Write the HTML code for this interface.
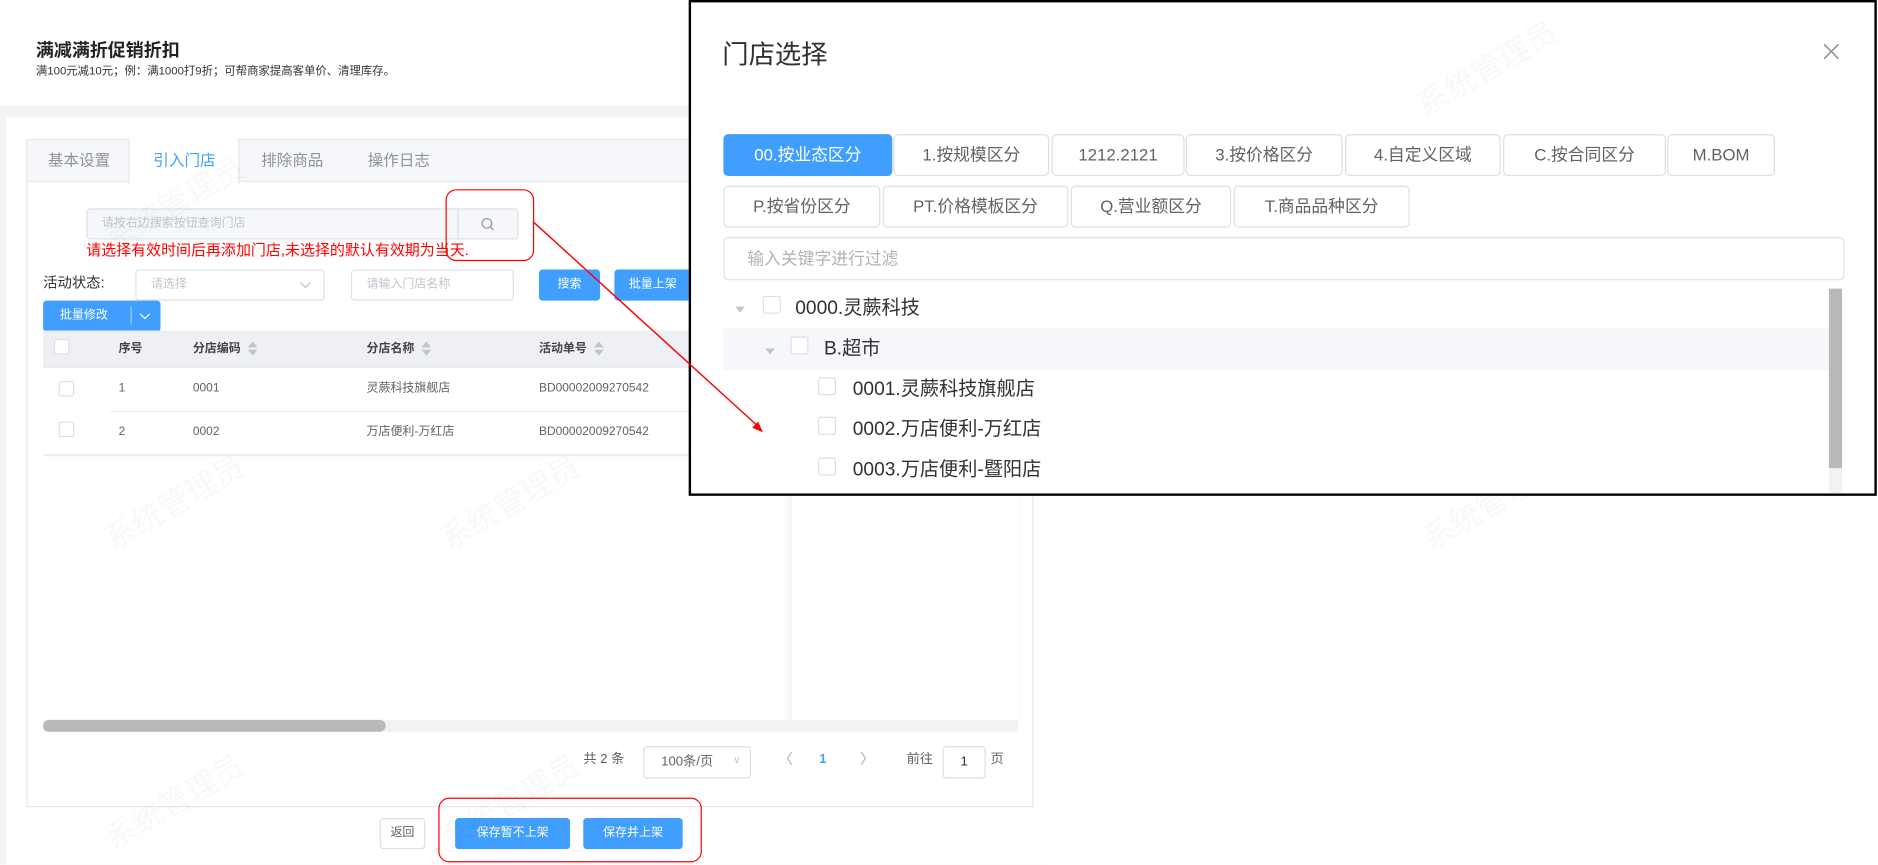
<!DOCTYPE html>
<html><head><meta charset="utf-8">
<style>
*{box-sizing:border-box;margin:0;padding:0}
html,body{width:1878px;height:864px;overflow:hidden;background:#fff}
body{font-family:"Liberation Sans","Noto Sans CJK SC",sans-serif;color:#606266}
#s{position:absolute;left:0;top:0;width:1568px;height:722px;transform:scale(1.1977);transform-origin:0 0;background:#fff;overflow:hidden}
.a{position:absolute;white-space:nowrap;line-height:1.2}
.btn{position:absolute;background:#409eff;color:#fff;font-size:10px;border-radius:3px;text-align:center}
.inp{position:absolute;border:1px solid #dcdfe6;border-radius:3px;background:#fff;font-size:10px;color:#c0c4cc;padding-left:12px}
.cb{position:absolute;width:13px;height:13px;border:1px solid #dcdfe6;border-radius:2px;background:#fff}
.tag{position:absolute;height:35px;border:1px solid #dcdfe6;border-radius:4px;font-size:14px;color:#606266;text-align:center;line-height:33px;background:#fff}
.wm{position:absolute;color:rgba(0,0,0,0.028);font-size:26px;transform:rotate(-30deg);white-space:nowrap}
.tr{position:absolute;font-size:16px;color:#303133;line-height:20px;white-space:nowrap}
.td{position:absolute;font-size:10px;line-height:14px;white-space:nowrap;color:#606266}
.sort{display:inline-block;vertical-align:middle;margin-left:6px;width:0;height:0;border-left:4px solid transparent;border-right:4px solid transparent;border-bottom:5px solid #c0c4cc;position:relative;top:-4px}
.sort:after{content:"";position:absolute;left:-4px;top:7px;border-left:4px solid transparent;border-right:4px solid transparent;border-top:5px solid #c0c4cc}
</style></head><body>
<div id="s">
<div class="a" style="left:30px;top:34px;font-size:15px;font-weight:bold;color:#222">满减满折促销折扣</div>
<div class="a" style="left:30px;top:54px;font-size:9.5px;color:#333">满100元减10元；例：满1000打9折；可帮商家提高客单价、清理库存。</div>
<div class="a" style="left:0;top:88px;width:875px;height:634px;background:#f2f3f5"></div>
<div class="a" style="left:5px;top:98px;width:870px;height:624px;background:#fff"></div>
<div class="a" style="left:22px;top:116px;width:841px;height:558px;border:1px solid #e4e7ed;background:#fff"></div>
<div class="a" style="left:22px;top:116px;width:841px;height:36px;background:#f5f7fa;border:1px solid #e4e7ed"></div>
<div class="a" style="left:107px;top:116px;width:93px;height:37px;background:#fff;border-left:1px solid #e4e7ed;border-right:1px solid #e4e7ed"></div>
<div class="a" style="left:40px;top:126px;font-size:13px;color:#909399">基本设置</div>
<div class="a" style="left:128px;top:126px;font-size:13px;color:#409eff">引入门店</div>
<div class="a" style="left:218px;top:126px;font-size:13px;color:#909399">排除商品</div>
<div class="a" style="left:307px;top:126px;font-size:13px;color:#909399">操作日志</div>
<div class="inp" style="left:72px;top:174px;width:311px;height:26px;line-height:24px;background:#f5f7fa;border-radius:3px 0 0 3px">请按右边搜索按钮查询门店</div>
<div class="a" style="left:382px;top:174px;width:51px;height:26px;border:1px solid #dcdfe6;background:#f5f7fa;border-radius:0 3px 3px 0"></div>
<svg class="a" style="left:401px;top:181px" width="12" height="12" viewBox="0 0 12 12"><circle cx="5.5" cy="5.5" r="4" fill="none" stroke="#909399" stroke-width="1"/><path d="M8.5 8.5L11 11" stroke="#909399"/></svg>
<div class="a" style="left:372px;top:158px;width:74px;height:60px;border:1.5px solid #f00;border-radius:9px"></div>
<div class="a" style="left:72px;top:202px;font-size:12.5px;color:#f00">请选择有效时间后再添加门店,未选择的默认有效期为当天.</div>
<div class="a" style="left:36px;top:229px;font-size:12px;color:#333">活动状态:</div>
<div class="inp" style="left:113px;top:225px;width:158px;height:26px;line-height:24px">请选择</div>
<svg class="a" style="left:250px;top:234px" width="10" height="8"><path d="M1 2l4 4 4-4" fill="none" stroke="#c0c4cc"/></svg>
<div class="inp" style="left:293px;top:225px;width:136px;height:26px;line-height:24px">请输入门店名称</div>
<div class="btn" style="left:450px;top:225px;width:51px;height:26px;line-height:26px">搜索</div>
<div class="btn" style="left:513px;top:225px;width:64px;height:26px;line-height:26px">批量上架</div>
<div class="btn" style="left:36px;top:251px;width:98px;height:26px;line-height:26px;text-align:left;padding-left:14px">批量修改</div>
<div class="a" style="left:109px;top:256px;width:1px;height:15px;background:rgba(255,255,255,.5)"></div>
<svg class="a" style="left:116px;top:260px" width="10" height="8"><path d="M1 2l4 4 4-4" fill="none" stroke="#fff"/></svg>
<div class="a" style="left:36px;top:276px;width:540px;height:31px;background:#eef0f5;border-bottom:1px solid #e4e7ed"></div>
<div class="cb" style="left:45px;top:283px"></div>
<div class="td" style="left:99px;top:285px;color:#444;font-weight:bold">序号</div>
<div class="td" style="left:161px;top:285px;color:#444;font-weight:bold">分店编码<span class="sort"></span></div>
<div class="td" style="left:306px;top:285px;color:#444;font-weight:bold">分店名称<span class="sort"></span></div>
<div class="td" style="left:450px;top:285px;color:#444;font-weight:bold">活动单号<span class="sort"></span></div>
<div class="cb" style="left:49px;top:318px"></div>
<div class="td" style="left:99px;top:318px">1</div>
<div class="td" style="left:161px;top:318px">0001</div>
<div class="td" style="left:306px;top:318px">灵蕨科技旗舰店</div>
<div class="td" style="left:450px;top:318px">BD00002009270542</div>
<div class="a" style="left:92px;top:343px;width:484px;height:1px;background:#ebeef5"></div>
<div class="cb" style="left:49px;top:352px"></div>
<div class="td" style="left:99px;top:354px">2</div>
<div class="td" style="left:161px;top:354px">0002</div>
<div class="td" style="left:306px;top:354px">万店便利-万红店</div>
<div class="td" style="left:450px;top:354px">BD00002009270542</div>
<div class="a" style="left:36px;top:379px;width:827px;height:2px;background:#ebeef5"></div>
<div class="a" style="left:661px;top:380px;width:190px;height:224px;background:#fff;box-shadow:-2px 0 6px rgba(0,0,0,.08)"></div>
<div class="a" style="left:36px;top:601px;width:814px;height:10px;background:#f2f2f2"></div>
<div class="a" style="left:36px;top:601px;width:286px;height:10px;background:#b9b9b9;border-radius:5px"></div>
<div class="a" style="left:487px;top:628px;font-size:11px;color:#606266">共 2 条</div>
<div class="a" style="left:537px;top:623px;width:90px;height:27px;border:1px solid #dcdfe6;border-radius:3px;font-size:11px;line-height:25px;padding-left:14px">100条/页</div>
<div class="a" style="left:613px;top:629px;font-size:9px;color:#c0c4cc">v</div>
<div class="a" style="left:650px;top:627px;font-size:12px;color:#aaa">〈</div>
<div class="a" style="left:684px;top:628px;font-size:11px;color:#409eff;font-weight:bold">1</div>
<div class="a" style="left:718px;top:627px;font-size:12px;color:#aaa">〉</div>
<div class="a" style="left:757px;top:628px;font-size:11px">前往</div>
<div class="a" style="left:787px;top:623px;width:36px;height:27px;border:1px solid #dcdfe6;border-radius:3px;font-size:11px;line-height:25px;text-align:center;color:#333">1</div>
<div class="a" style="left:827px;top:628px;font-size:11px">页</div>
<div class="a" style="left:317px;top:683px;width:38px;height:26px;border:1px solid #dcdfe6;border-radius:3px;font-size:10px;line-height:24px;text-align:center;color:#606266;background:#fff">返回</div>
<div class="btn" style="left:380px;top:683px;width:96px;height:26px;line-height:26px">保存暂不上架</div>
<div class="btn" style="left:487px;top:683px;width:83px;height:26px;line-height:26px">保存并上架</div>
<div class="a" style="left:366px;top:666px;width:220px;height:54px;border:1.5px solid #f00;border-radius:9px"></div>
<div class="wm" style="left:80px;top:150px">系统管理员</div>
<div class="wm" style="left:80px;top:400px">系统管理员</div>
<div class="wm" style="left:360px;top:400px">系统管理员</div>
<div class="wm" style="left:80px;top:650px">系统管理员</div>
<div class="wm" style="left:360px;top:650px">系统管理员</div>
<div class="wm" style="left:1180px;top:400px">系统管理员</div>
<div class="a" style="left:575px;top:0;width:992px;height:414px;border:2px solid #000;background:#fff;overflow:hidden">
 <div class="wm" style="left:600px;top:40px">系统管理员</div>
 <div class="a" style="left:26px;top:31px;font-size:22px;color:#303133">门店选择</div>
 <svg class="a" style="left:945px;top:34px" width="14" height="14"><path d="M1 1L13 13M13 1L1 13" stroke="#909399" stroke-width="1.3"/></svg>
 <div class="tag" style="left:27px;top:110px;width:141px;background:#409eff;border-color:#409eff;color:#fff">00.按业态区分</div>
 <div class="tag" style="left:169px;top:110px;width:130px">1.按规模区分</div>
 <div class="tag" style="left:301px;top:110px;width:111px">1212.2121</div>
 <div class="tag" style="left:413px;top:110px;width:131px">3.按价格区分</div>
 <div class="tag" style="left:546px;top:110px;width:130px">4.自定义区域</div>
 <div class="tag" style="left:678px;top:110px;width:136px">C.按合同区分</div>
 <div class="tag" style="left:815px;top:110px;width:90px">M.BOM</div>
 <div class="tag" style="left:27px;top:153px;width:131px">P.按省份区分</div>
 <div class="tag" style="left:160px;top:153px;width:155px">PT.价格模板区分</div>
 <div class="tag" style="left:317px;top:153px;width:134px">Q.营业额区分</div>
 <div class="tag" style="left:453px;top:153px;width:147px">T.商品品种区分</div>
 <div class="a" style="left:27px;top:196px;width:936px;height:36px;border:1px solid #dcdfe6;border-radius:4px;font-size:14px;color:#b0b3b8;line-height:34px;padding-left:19px">输入关键字进行过滤</div>
 <div class="a" style="left:27px;top:272px;width:923px;height:35px;background:#f5f7fa"></div>
 <div class="a" style="left:37px;top:254px;width:0;height:0;border-left:4px solid transparent;border-right:4px solid transparent;border-top:5px solid #c0c4cc"></div>
 <div class="cb" style="left:60px;top:245px;width:15px;height:15px"></div>
 <div class="tr" style="left:87px;top:246px">0000.灵蕨科技</div>
 <div class="a" style="left:62px;top:289px;width:0;height:0;border-left:4px solid transparent;border-right:4px solid transparent;border-top:5px solid #c0c4cc"></div>
 <div class="cb" style="left:83px;top:279px;width:15px;height:15px"></div>
 <div class="tr" style="left:111px;top:280px">B.超市</div>
 <div class="cb" style="left:106px;top:313px;width:15px;height:15px"></div>
 <div class="tr" style="left:135px;top:314px">0001.灵蕨科技旗舰店</div>
 <div class="cb" style="left:106px;top:346px;width:15px;height:15px"></div>
 <div class="tr" style="left:135px;top:347px">0002.万店便利-万红店</div>
 <div class="cb" style="left:106px;top:380px;width:15px;height:15px"></div>
 <div class="tr" style="left:135px;top:381px">0003.万店便利-暨阳店</div>
 <div class="a" style="left:950px;top:239px;width:11px;height:150px;background:#b9b9b9"></div>
 <div class="a" style="left:950px;top:389px;width:11px;height:30px;background:#f2f2f2"></div>
</div>
<svg class="a" style="left:0;top:0" width="1568" height="722"><path d="M445 185L633 356" stroke="#f00" stroke-width="1.2"/><path d="M637 361l-9-4 5-5z" fill="#f00"/></svg>
</div>
</body></html>
